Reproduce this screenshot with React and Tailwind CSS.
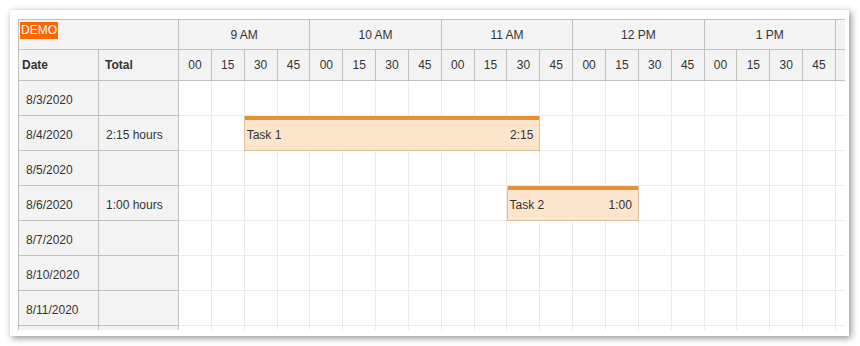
const HOUR_WIDTH = 131.4;
const CELL_WIDTH = HOUR_WIDTH / 4;

// the last hour is only partly visible, its labels fall outside the clip
const hours = [
  { label: '9 AM', visible: true },
  { label: '10 AM', visible: true },
  { label: '11 AM', visible: true },
  { label: '12 PM', visible: true },
  { label: '1 PM', visible: true },
  { label: '2 PM', visible: false }
];
const minutes = ['00', '15', '30', '45'];

// last row is cut by the viewport, only its top shows
const rows = [
  { date: '8/3/2020', total: '' },
  { date: '8/4/2020', total: '2:15 hours', event: { text: 'Task 1', duration: '2:15', start: 0.5, length: 2.25 } },
  { date: '8/5/2020', total: '' },
  { date: '8/6/2020', total: '1:00 hours', event: { text: 'Task 2', duration: '1:00', start: 2.5, length: 1 } },
  { date: '8/7/2020', total: '' },
  { date: '8/10/2020', total: '' },
  { date: '8/11/2020', total: '' },
  { date: '', total: '' }
];

function EventBox({ event }) {
  return (
    <div
      className="absolute top-0 flex h-[35px] flex-col border border-t-0 border-[#dcc09c] bg-[#fce5cd]"
      style={{ left: event.start * HOUR_WIDTH - 1, width: event.length * HOUR_WIDTH + 1 }}
    >
      <div className="h-[4px] shrink-0 bg-[#e69138]" />
      <div className="flex flex-1 items-center justify-between pl-[2px] pr-[6px]">
        <span>{event.text}</span>
        <span>{event.duration}</span>
      </div>
    </div>
  );
}

export default function App() {
  return (
    <div
      className="h-[346px] w-[860px] bg-white pl-[10px] pt-[10px] text-[12px] text-[#333]"
      style={{ fontFamily: '"Liberation Sans", Arial, sans-serif' }}
    >
      <div className="h-[326px] w-[839px] bg-white pl-2 pt-[9px] shadow-[2px_2px_7px_rgba(0,0,0,0.45)]">
        <div className="h-[311px] w-[827px] overflow-hidden border-l border-t border-[#c0c0c0]">
          {/* header */}
          <div className="flex">
            <div className="flex w-[160px] shrink-0 flex-col bg-[#f3f3f3]">
              <div className="h-[30px] border-b border-r border-[#c0c0c0] pl-px pt-px">
                <span className="inline-block bg-[#ff6600] px-px leading-[17px] text-white">DEMO</span>
              </div>
              <div className="flex h-[31px] font-bold">
                <div className="flex w-[80px] items-center border-b border-r border-[#c0c0c0] pl-[3px]">Date</div>
                <div className="flex w-[80px] items-center border-b border-r border-[#c0c0c0] pl-[6px]">Total</div>
              </div>
            </div>
            <div className="flex shrink-0 bg-[#f3f3f3]">
              {hours.map((hour) => (
                <div key={hour.label} className="flex shrink-0 flex-col" style={{ width: HOUR_WIDTH }}>
                  <div className="flex h-[30px] items-center justify-center border-b border-r border-[#c0c0c0]">
                    {hour.visible ? hour.label : ''}
                  </div>
                  <div className="flex h-[31px]">
                    {minutes.map((minute) => (
                      <div
                        key={minute}
                        className="flex shrink-0 items-center justify-center border-b border-r border-[#c0c0c0]"
                        style={{ width: CELL_WIDTH }}
                      >
                        {hour.visible ? minute : ''}
                      </div>
                    ))}
                  </div>
                </div>
              ))}
            </div>
          </div>

          {/* body */}
          {rows.map((row, index) => (
            <div key={index} className="flex h-[35px]">
              <div className="flex w-[80px] shrink-0 items-center border-b border-r border-[#c0c0c0] bg-[#f3f3f3] pl-[7px] pt-[4px]">
                {row.date}
              </div>
              <div className="flex w-[80px] shrink-0 items-center border-b border-r border-[#c0c0c0] bg-[#f3f3f3] pl-[7px] pt-[4px]">
                {row.total}
              </div>
              <div className="relative flex shrink-0">
                {hours.flatMap((hour) =>
                  minutes.map((minute) => (
                    <div
                      key={hour.label + minute}
                      className="shrink-0 border-b border-r border-[#ebebeb]"
                      style={{ width: CELL_WIDTH }}
                    />
                  ))
                )}
                {row.event ? <EventBox event={row.event} /> : null}
              </div>
            </div>
          ))}
        </div>
      </div>
    </div>
  );
}
